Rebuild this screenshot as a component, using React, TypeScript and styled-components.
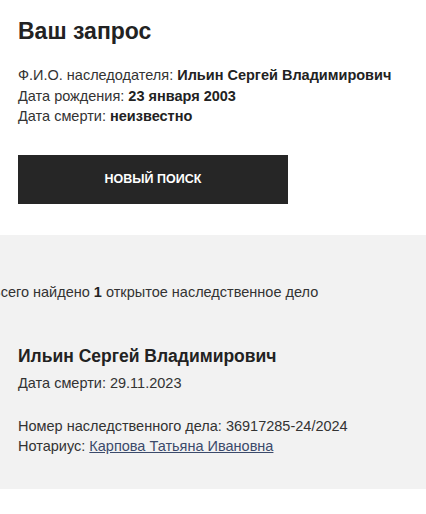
import React from "react";
import styled, { createGlobalStyle } from "styled-components";

const GlobalStyle = createGlobalStyle`
  html, body {
    margin: 0;
    padding: 0;
    background: #ffffff;
    font-family: "Liberation Sans", Arial, sans-serif;
    color: #2b2b2b;
    overflow: hidden;
  }
`;

const Page = styled.div`
  width: 426px;
  min-height: 514px;
  display: flex;
  flex-direction: column;
`;

const RequestBlock = styled.section`
  padding: 17px 18px 31px;
  display: flex;
  flex-direction: column;
`;

const Title = styled.h1`
  margin: 0 0 20px;
  font-size: 23px;
  line-height: 28px;
  font-weight: 700;
  color: #222;
`;

const Line = styled.div`
  font-size: 14.5px;
  line-height: 20.5px;
  color: #333;
`;

const Strong = styled.b`
  font-weight: 700;
  color: #222;
`;

const SearchButton = styled.button`
  margin-top: 28px;
  width: 270px;
  height: 49px;
  border: none;
  background: #262626;
  color: #fff;
  font-family: inherit;
  font-size: 12.5px;
  font-weight: 700;
  text-transform: uppercase;
  cursor: pointer;
`;

const Results = styled.section`
  background: #f2f2f2;
  padding: 47px 18px 33px;
  display: flex;
  flex-direction: column;
`;

const Summary = styled.div`
  margin-left: -27px;
  font-size: 14.5px;
  line-height: 20px;
  color: #333;
`;

const Case = styled.div`
  margin-top: 42px;
  display: flex;
  flex-direction: column;
`;

const CaseName = styled.h2`
  margin: 0 0 5px;
  font-size: 17.5px;
  line-height: 24px;
  font-weight: 700;
  color: #222;
`;

const CaseLine = styled(Line)`
  line-height: 20px;
`;

const Gap = styled.div`
  height: 23px;
`;

const NotaryLink = styled.a`
  color: #3b4a6b;
  text-decoration: underline;
`;

export default function App() {
  return (
    <Page>
      <GlobalStyle />
      <RequestBlock>
        <Title>Ваш запрос</Title>
        <Line>
          Ф.И.О. наследодателя: <Strong>Ильин Сергей Владимирович</Strong>
        </Line>
        <Line>
          Дата рождения: <Strong>23 января 2003</Strong>
        </Line>
        <Line>
          Дата смерти: <Strong>неизвестно</Strong>
        </Line>
        <SearchButton>Новый поиск</SearchButton>
      </RequestBlock>
      <Results>
        <Summary>
          Всего найдено <Strong>1</Strong> открытое наследственное дело
        </Summary>
        <Case>
          <CaseName>Ильин Сергей Владимирович</CaseName>
          <CaseLine>Дата смерти: 29.11.2023</CaseLine>
          <Gap />
          <CaseLine>Номер наследственного дела: 36917285-24/2024</CaseLine>
          <CaseLine>
            Нотариус: <NotaryLink href="#">Карпова Татьяна Ивановна</NotaryLink>
          </CaseLine>
        </Case>
      </Results>
    </Page>
  );
}
